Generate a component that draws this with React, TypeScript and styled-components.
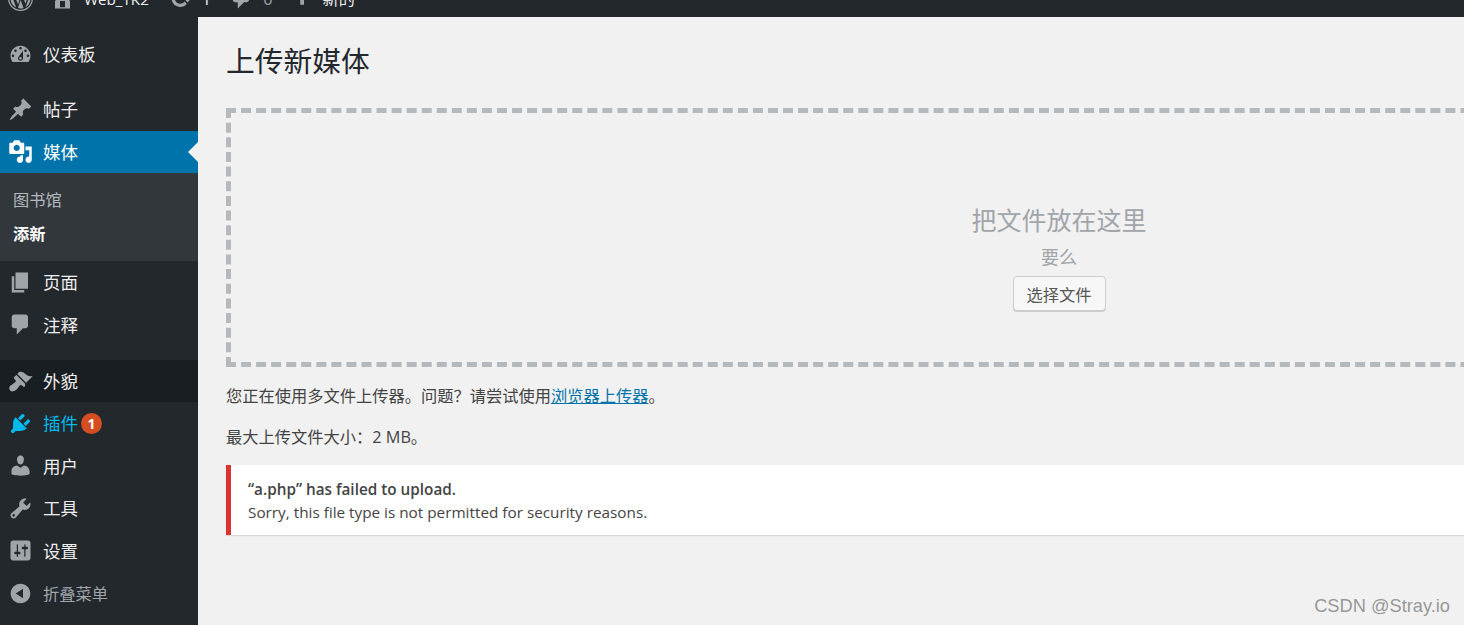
import styled, { createGlobalStyle } from 'styled-components'

const cjk = `"Open Sans", "Noto Sans CJK SC", sans-serif`;

const ICONS: Record<string, string> = {
  dashboard: "M3.76 16h12.48c1.1-1.37 1.76-3.11 1.76-5 0-4.42-3.58-8-8-8s-8 3.58-8 8c0 1.89.66 3.63 1.76 5zM10 4c.55 0 1 .45 1 1s-.45 1-1 1-1-.45-1-1 .45-1 1-1zM6 6c.55 0 1 .45 1 1s-.45 1-1 1-1-.45-1-1 .45-1 1-1zm8 0c.55 0 1 .45 1 1s-.45 1-1 1-1-.45-1-1 .45-1 1-1zm-5.37 5.55L12 7v6c0 1.1-.9 2-2 2s-2-.9-2-2c0-.57.24-1.08.63-1.45zM4 10c.55 0 1 .45 1 1s-.45 1-1 1-1-.45-1-1 .45-1 1-1zm12 0c.55 0 1 .45 1 1s-.45 1-1 1-1-.45-1-1 .45-1 1-1zm-5 3c0-.55-.45-1-1-1s-1 .45-1 1 .45 1 1 1 1-.45 1-1z",
  post: "M10.44 3.02l1.82-1.82 6.36 6.35-1.83 1.82c-1.05-.68-2.48-.57-3.41.36l-.75.75c-.92.93-1.04 2.35-.35 3.41l-1.83 1.82-2.41-2.41-2.8 2.79c-.42.42-3.38 2.71-3.8 2.29s1.86-3.39 2.28-3.81l2.79-2.79L4.1 9.36l1.83-1.82c1.05.69 2.48.57 3.4-.36l.75-.75c.93-.92 1.05-2.35.36-3.41z",
  media: "M13 11V4c0-.55-.45-1-1-1h-1.67L9 1H5L3.67 3H2c-.55 0-1 .45-1 1v7c0 .55.45 1 1 1h10c.55 0 1-.45 1-1zM7 4.5c1.38 0 2.5 1.12 2.5 2.5S8.38 9.5 7 9.5 4.5 8.38 4.5 7 5.62 4.5 7 4.5zM14 6h5v10.5c0 1.38-1.12 2.5-2.5 2.5S14 17.88 14 16.5s1.12-2.5 2.5-2.5c.17 0 .34.02.5.05V9h-3V6zm-4 8.05V13h2v3.5c0 1.38-1.12 2.5-2.5 2.5S7 17.88 7 16.5 8.12 14 9.5 14c.17 0 .34.02.5.05z",
  page: "M6 15V2h10v13H6zm-1 1h8v2H3V5h2v11z",
  comments: "M5 2h9c1.1 0 2 .9 2 2v7c0 1.1-.9 2-2 2h-2l-5 5v-5H5c-1.1 0-2-.9-2-2V4c0-1.1.9-2 2-2z",
  appearance: "M14.48 11.06L7.41 3.99l1.5-1.5c.5-.56 2.3-.47 3.51.32 1.21.8 1.43 1.28 2.91 2.1 1.18.64 2.45 1.26 4.45.85zm-.71.71L6.7 4.7 4.93 6.47c-.39.39-.39 1.02 0 1.41l1.06 1.06c.39.39.39 1.03 0 1.42-.6.6-1.43 1.11-2.21 1.69-.35.26-.7.53-1.01.84C1.43 13.23 1 14.84 1 15.5c0 .82 1.18 2.5 2.5 2.5.66 0 2.27-.43 3.6-1.77.31-.31.58-.66.84-1.01.58-.78 1.09-1.61 1.69-2.21.39-.39 1.02-.39 1.41 0l1.06 1.06c.39.39 1.02.39 1.41 0z",
  plugins: "M13.11 4.36L9.87 7.6 8 5.73l3.24-3.24c.35-.34 1.05-.2 1.56.32.52.51.66 1.21.31 1.55zm-8 1.77l.91-1.12 9.01 9.01-1.19.84c-.71.71-2.63 1.16-3.82 1.16H6.14L4.9 17.26c-.59.59-1.54.59-2.12 0-.59-.58-.59-1.53 0-2.12l1.24-1.24v-3.88c0-1.13.4-3.19 1.09-3.89zm7.26 3.97l3.24-3.24c.34-.35 1.04-.21 1.55.31.52.51.66 1.21.31 1.55l-3.24 3.25z",
  users: "M10 9.25c-2.27 0-2.73-3.44-2.73-3.44C7 4.02 7.82 2 9.97 2c2.16 0 2.98 2.02 2.71 3.81 0 0-.41 3.44-2.68 3.44zm0 2.57L12.72 10c2.39 0 4.52 2.33 4.52 4.53v2.49s-3.65 1.13-7.24 1.13c-3.65 0-7.24-1.13-7.24-1.13v-2.49c0-2.25 1.94-4.48 4.47-4.48z",
  tools: "M16.68 9.77c-1.34 1.34-3.3 1.67-4.95.99l-5.41 6.52c-.99.99-2.59.99-3.58 0s-.99-2.59 0-3.57l6.52-5.42c-.68-1.65-.35-3.61.99-4.95 1.28-1.28 3.12-1.62 4.72-1.06l-2.89 2.89 2.82 2.82 2.86-2.87c.53 1.58.18 3.39-1.08 4.65zM3.81 16.21c.4.39 1.04.39 1.43 0 .4-.4.4-1.04 0-1.43-.39-.4-1.03-.4-1.43 0-.39.39-.39 1.03 0 1.43z",
  settings: "M18 16V4c0-1.1-.9-2-2-2H4c-1.1 0-2 .9-2 2v12c0 1.1.9 2 2 2h12c1.1 0 2-.9 2-2zM8 11h1c.55 0 1 .45 1 1s-.45 1-1 1H8v1.5c0 .28-.22.5-.5.5s-.5-.22-.5-.5V13H6c-.55 0-1-.45-1-1s.45-1 1-1h1V5.5c0-.28.22-.5.5-.5s.5.22.5.5V11zm5-2h-1c-.55 0-1-.45-1-1s.45-1 1-1h1V5.5c0-.28.22-.5.5-.5s.5.22.5.5V7h1c.55 0 1 .45 1 1s-.45 1-1 1h-1v5.5c0 .28-.22.5-.5.5s-.5-.22-.5-.5V9z",
  collapse: "M10 2.16c4.33 0 7.84 3.51 7.84 7.84s-3.51 7.84-7.84 7.84S2.16 14.33 2.16 10 5.71 2.16 10 2.16zm2 11.72V6.12L6.18 9.97z",
  wordpress: "M20 10c0-5.52-4.48-10-10-10S0 4.48 0 10s4.48 10 10 10 10-4.48 10-10zM10 1.01c4.97 0 8.99 4.02 8.99 8.99s-4.02 8.99-8.99 8.99S1.01 14.97 1.01 10 5.03 1.01 10 1.01zM8.01 14.82L4.96 6.61c.49-.03 1.05-.08 1.05-.08.43-.05.38-1.01-.06-.99 0 0-1.29.1-2.13.1-.15 0-.33 0-.52-.01 1.44-2.17 3.9-3.6 6.7-3.6 2.09 0 3.99.79 5.41 2.09-.6-.08-1.45.35-1.45 1.42 0 .66.38 1.22.79 1.88.31.54.5 1.22.5 2.21 0 1.34-1.27 4.48-1.27 4.48l-2.71-7.5c.48-.03.75-.16.75-.16.43-.05.38-1.1-.05-1.08 0 0-1.3.11-2.14.11-.78 0-2.11-.11-2.11-.11-.43-.02-.48 1.06-.05 1.08l.84.08 1.12 3.04zm6.02 2.15L16.64 10s.67-1.69.39-3.81c.63 1.14.94 2.42.94 3.81 0 2.96-1.56 5.58-3.94 6.97zM2.68 6.77L6.5 17.25c-2.67-1.3-4.47-4.07-4.47-7.25 0-1.17.2-2.23.65-3.23zm7.45 4.53l2.29 6.25c-.75.27-1.57.42-2.42.42-.72 0-1.41-.11-2.06-.3z",
  home: "M16 8.5l1.53 1.53-1.06 1.06L10 4.62l-6.47 6.47-1.06-1.06L10 2.5l4 4v-2h2v4zm-6-2.46l6 5.99V18H4v-5.97zM12 17v-5H8v5h4z",
  update: "M10.2 3.28c3.53 0 6.43 2.61 6.92 6h2.08l-3.5 4-3.5-4h2.32c-.45-1.97-2.21-3.45-4.32-3.45-1.45 0-2.73.71-3.54 1.78L4.95 5.66C6.23 4.2 8.11 3.28 10.2 3.28zm-.4 13.44c-3.52 0-6.43-2.61-6.92-6H.8l3.5-4c1.17 1.33 2.33 2.67 3.5 4H5.48c.45 1.97 2.21 3.45 4.32 3.45 1.45 0 2.73-.71 3.54-1.78l1.71 1.95c-1.28 1.46-3.15 2.38-5.25 2.38z",
  plus: "M17 7v3h-5v5H9v-5H4V7h5V2h3v5h5z",
};

const GlobalStyle = createGlobalStyle`
  html, body {
    margin: 0;
    height: 625px;
    overflow: hidden;
    background: #f1f1f1;
    font-family: ${cjk};
  }
`;

const Page = styled.div`
  position: relative;
  width: 1464px;
  height: 625px;
  display: flex;
  flex-direction: column;
  overflow: hidden;
`;

// only the bottom of the admin bar is in the picture
const TopBar = styled.div`
  height: 17px;
  flex: none;
  background: #23282d;
  display: flex;
  align-items: flex-end;
  overflow: hidden;
  color: #eee;
`;

const BarItem = styled.div<{ $left: number; $gap?: number }>`
  height: 40px;
  flex: none;
  margin-left: ${p => p.$left}px;
  display: flex;
  align-items: flex-start;
  gap: ${p => p.$gap ?? 0}px;
  padding-top: 11px;
  box-sizing: border-box;
  font-size: 16.25px;
  line-height: 22px;
  white-space: nowrap;
`;

const BarIcon = styled.svg`
  width: 25px;
  height: 25px;
  fill: #a0a5aa;
  flex: none;
  margin-top: -2px;
`;

const SiteName = styled.span`
  font-size: 15.2px;
`;

const BarCount = styled.span<{ $dim?: boolean }>`
  color: ${p => (p.$dim ? '#a0a5aa' : '#eee')};
`;

const Body = styled.div`
  flex: 1;
  min-height: 0;
  display: flex;
`;

const Sidebar = styled.nav`
  width: 198px;
  flex: none;
  background: #23282d;
  padding-top: 16px;
  box-sizing: border-box;
`;

const Separator = styled.div<{ $height: number }>`
  height: ${p => p.$height}px;
`;

const MenuRow = styled.div<{ $current?: boolean; $hover?: boolean; $accent?: boolean; $muted?: boolean }>`
  position: relative;
  height: 42.4px;
  display: flex;
  align-items: center;
  font-size: ${p => (p.$muted ? '16.25px' : '17.5px')};
  background: ${p => (p.$current ? '#0073aa' : p.$hover ? '#191e23' : 'transparent')};
  color: ${p => (p.$accent ? '#00b9eb' : p.$muted ? '#a0a5aa' : '#eee')};
  ${p => p.$current && 'color: #fff;'}
`;

const MenuLabel = styled.span`
  margin-bottom: 1.2px;
`;

const MenuIcon = styled.svg<{ $color: string }>`
  width: 25px;
  height: 25px;
  margin-left: 8px;
  margin-right: 10px;
  fill: ${p => p.$color};
  flex: none;
`;

const CurrentArrow = styled.span`
  position: absolute;
  right: 0;
  top: 11px;
  border: 10px solid transparent;
  border-right-color: #f1f1f1;
  border-left-width: 0;
`;

const Badge = styled.span`
  width: 21px;
  height: 21px;
  margin-left: 3px;
  border-radius: 50%;
  background: #d54e21;
  color: #fff;
  font-size: 14px;
  font-weight: 700;
  display: flex;
  align-items: center;
  justify-content: center;
`;

const SubMenu = styled.div`
  height: 88px;
  background: #32373c;
  padding: 10px 0 0 13px;
  box-sizing: border-box;
  font-size: 16.25px;
`;

const SubItem = styled.div<{ $active?: boolean }>`
  height: 34px;
  line-height: 34px;
  color: ${p => (p.$active ? '#fff' : '#b4b9be')};
  font-weight: ${p => (p.$active ? 700 : 400)};
`;

const Main = styled.main`
  flex: 1;
  min-width: 0;
  background: #f1f1f1;
  padding-left: 28px;
  overflow: hidden;
  font-size: 16.25px;
  color: #444;
`;

const Title = styled.h1`
  margin: 0;
  padding-top: 24px;
  height: 91px;
  box-sizing: border-box;
  font-size: 28.75px;
  font-weight: 400;
  line-height: 40px;
  color: #23282d;
`;

const DropZone = styled.div`
  width: 1666px;
  height: 259px;
  box-sizing: border-box;
  border: 5px dashed #b4b9be;
  padding-top: 91px;
  display: flex;
  flex-direction: column;
  align-items: center;
`;

const DropTitle = styled.div`
  font-size: 25px;
  line-height: 32px;
  color: #a0a5aa;
`;

const DropOr = styled.div`
  margin-top: 8px;
  font-size: 18px;
  line-height: 26px;
  color: #a0a5aa;
`;

const PickButton = styled.button`
  margin-top: 6px;
  width: 93px;
  height: 35px;
  padding: 0;
  background: #f7f7f7;
  border: 1px solid #ccc;
  border-radius: 4px;
  box-shadow: 0 1px 0 #ccc;
  color: #555;
  font-family: inherit;
  font-size: 16.25px;
`;

const Hint = styled.p<{ $top: number }>`
  margin: ${p => p.$top}px 0 0;
  line-height: 23px;
`;

const HintLink = styled.a`
  color: #0073aa;
  text-decoration: underline;
`;

const Notice = styled.div`
  margin-top: 16px;
  height: 70px;
  box-sizing: border-box;
  background: #fff;
  border-left: 5px solid #dc3232;
  box-shadow: 0 1px 1px rgba(0, 0, 0, 0.1);
  padding: 13px 0 0 17px;
  font-size: 15.3px;
  line-height: 23px;
`;

const NoticeTitle = styled.strong`
  display: block;
  font-weight: 600;
`;

const Watermark = styled.div`
  position: absolute;
  right: 14px;
  bottom: 8px;
  font-family: "Liberation Sans", Arial, sans-serif;
  font-size: 18.25px;
  line-height: 22px;
  color: rgba(120, 120, 120, 0.75);
`;

function Glyph({ name, color }: { name: string; color: string }) {
  return (
    <MenuIcon $color={color} viewBox="0 0 20 20">
      <path d={ICONS[name]} />
    </MenuIcon>
  );
}

function BarGlyph({ name }: { name: string }) {
  return (
    <BarIcon viewBox="0 0 20 20">
      <path d={ICONS[name]} />
    </BarIcon>
  );
}

export default function App() {
  return (
    <>
      <GlobalStyle />
      <Page>
        <TopBar>
          <BarItem $left={8}><BarGlyph name="wordpress" /></BarItem>
          <BarItem $left={17} $gap={9}><BarGlyph name="home" /><SiteName>Web_TK2</SiteName></BarItem>
          <BarItem $left={19} $gap={9}><BarGlyph name="update" /><BarCount>1</BarCount></BarItem>
          <BarItem $left={18} $gap={9}><BarGlyph name="comments" /><BarCount $dim>0</BarCount></BarItem>
          <BarItem $left={17} $gap={8}><BarGlyph name="plus" />新的</BarItem>
        </TopBar>

        <Body>
          <Sidebar>
            <MenuRow><Glyph name="dashboard" color="#a0a5aa" /><MenuLabel>仪表板</MenuLabel></MenuRow>
            <Separator $height={13} />
            <MenuRow><Glyph name="post" color="#a0a5aa" /><MenuLabel>帖子</MenuLabel></MenuRow>
            <MenuRow $current><Glyph name="media" color="#fff" /><MenuLabel>媒体</MenuLabel><CurrentArrow /></MenuRow>
            <SubMenu>
              <SubItem>图书馆</SubItem>
              <SubItem $active>添新</SubItem>
            </SubMenu>
            <MenuRow><Glyph name="page" color="#a0a5aa" /><MenuLabel>页面</MenuLabel></MenuRow>
            <MenuRow><Glyph name="comments" color="#a0a5aa" /><MenuLabel>注释</MenuLabel></MenuRow>
            <Separator $height={14} />
            <MenuRow $hover><Glyph name="appearance" color="#a0a5aa" /><MenuLabel>外貌</MenuLabel></MenuRow>
            <MenuRow $accent><Glyph name="plugins" color="#00b9eb" /><MenuLabel>插件</MenuLabel><Badge>1</Badge></MenuRow>
            <MenuRow><Glyph name="users" color="#a0a5aa" /><MenuLabel>用户</MenuLabel></MenuRow>
            <MenuRow><Glyph name="tools" color="#a0a5aa" /><MenuLabel>工具</MenuLabel></MenuRow>
            <MenuRow><Glyph name="settings" color="#a0a5aa" /><MenuLabel>设置</MenuLabel></MenuRow>
            <MenuRow $muted><Glyph name="collapse" color="#a0a5aa" /><MenuLabel>折叠菜单</MenuLabel></MenuRow>
          </Sidebar>

          <Main>
            <Title>上传新媒体</Title>
            <DropZone>
              <DropTitle>把文件放在这里</DropTitle>
              <DropOr>要么</DropOr>
              <PickButton>选择文件</PickButton>
            </DropZone>
            <Hint $top={18}>您正在使用多文件上传器。问题？请尝试使用<HintLink href="#">浏览器上传器</HintLink>。</Hint>
            <Hint $top={18}>最大上传文件大小：2 MB。</Hint>
            <Notice>
              <NoticeTitle>“a.php” has failed to upload.</NoticeTitle>
              Sorry, this file type is not permitted for security reasons.
            </Notice>
          </Main>
        </Body>

        <Watermark>CSDN @Stray.io</Watermark>
      </Page>
    </>
  );
}
